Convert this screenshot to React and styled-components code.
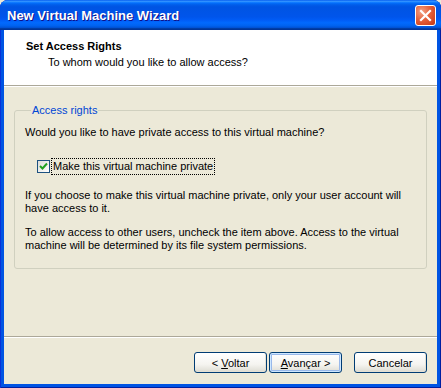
import React from 'react'
import styled, { createGlobalStyle } from 'styled-components'

const GlobalStyle = createGlobalStyle`
  html, body {
    margin: 0;
    padding: 0;
    background: #ece9d8;
  }
  body {
    font-family: 'Liberation Sans', Arial, sans-serif;
    font-size: 11px;
    color: #000;
  }
`

const App = () => {
  return (
    <Window>
      <GlobalStyle />
      <TitleBar>
        <TitleText>New Virtual Machine Wizard</TitleText>
        <CloseButton aria-label='Close'>
          <svg width='13' height='13' viewBox='0 0 13 13'>
            <path d='M2 2 L11 11 M11 2 L2 11' stroke='#fff' strokeWidth='2.2' strokeLinecap='square' />
          </svg>
        </CloseButton>
      </TitleBar>
      <Frame>
        <Header>
          <HeaderTitle>Set Access Rights</HeaderTitle>
          <HeaderSubtitle>To whom would you like to allow access?</HeaderSubtitle>
        </Header>
        <Body>
          <GroupBox>
            <Legend>Access rights</Legend>
            <Text>Would you like to have private access to this virtual machine?</Text>
            <CheckRow>
              <CheckBox>
                <svg width='9' height='9' viewBox='0 0 9 9'>
                  <path d='M1 4 L3.5 6.5 L8 1.5' fill='none' stroke='#21a121' strokeWidth='2' />
                </svg>
              </CheckBox>
              <CheckLabel>Make this virtual machine private</CheckLabel>
            </CheckRow>
            <Paragraph>
              If you choose to make this virtual machine private, only your user account will
              have access to it.
            </Paragraph>
            <Paragraph $last>
              To allow access to other users, uncheck the item above. Access to the virtual
              machine will be determined by its file system permissions.
            </Paragraph>
          </GroupBox>
        </Body>
        <Footer>
          <Button>&lt; <u>V</u>oltar</Button>
          <Button $default><u>A</u>vançar &gt;</Button>
          <Button $gap>Cancelar</Button>
        </Footer>
      </Frame>
    </Window>
  )
}

const Window = styled.div`
  width: 441px;
  height: 388px;
  display: flex;
  flex-direction: column;
  background: #0054e3;
  border-radius: 8px 8px 0 0;
  overflow: hidden;
  box-shadow: inset 1px 0 0 #0831d9, inset -1px 0 0 #001ea0, inset 0 -1px 0 #001ea0;
`

const TitleBar = styled.div`
  height: 30px;
  flex: none;
  display: flex;
  align-items: center;
  justify-content: space-between;
  padding: 0 5px 0 7px;
  background: linear-gradient(
    to bottom,
    #0058ee 0%,
    #3593ff 4%,
    #288eff 6%,
    #127dff 8%,
    #036ffc 10%,
    #0262ee 14%,
    #0057e5 20%,
    #0054e3 24%,
    #0055eb 56%,
    #005bf5 66%,
    #026afe 76%,
    #0062ef 86%,
    #0052d6 92%,
    #0040ab 94%,
    #003092 100%
  );
`

const TitleText = styled.span`
  color: #fff;
  font-family: 'Liberation Sans', Arial, sans-serif;
  font-weight: bold;
  font-size: 13px;
  text-shadow: 1px 1px #0f1089;
  padding-top: 1px;
`

const CloseButton = styled.button`
  width: 21px;
  height: 21px;
  padding: 0;
  display: flex;
  align-items: center;
  justify-content: center;
  border: 1px solid #fff;
  border-radius: 3px;
  background: radial-gradient(circle at 30% 30%, #f3a286 0%, #e4613c 45%, #d2451f 80%, #b83a17 100%);
`

const Frame = styled.div`
  flex: 1;
  display: flex;
  flex-direction: column;
  margin: 0 4px 4px 4px;
  background: #ece9d8;
`

const Header = styled.div`
  height: 56px;
  flex: none;
  background: #fff;
  border-bottom: 1px solid #aca899;
  padding: 9px 0 0 22px;
  box-sizing: border-box;
  box-shadow: 0 1px 0 #fff;
`

const HeaderTitle = styled.div`
  font-weight: bold;
  font-size: 11px;
  line-height: 14px;
`

const HeaderSubtitle = styled.div`
  padding-left: 22px;
  line-height: 14px;
  margin-top: 2px;
`

const Body = styled.div`
  flex: 1;
  padding: 18px 10px 0 10px;
`

const GroupBox = styled.fieldset`
  margin: 0;
  padding: 9px 10px 16px 10px;
  border: 1px solid #d0d0bf;
  border-radius: 3px;
  min-width: 0;
`

const Legend = styled.legend`
  color: #0046d5;
  padding: 0 1px;
  margin-left: 6px;
  line-height: 13px;
`

const Text = styled.div`
  line-height: 13px;
`

const CheckRow = styled.div`
  display: flex;
  align-items: center;
  margin: 20px 0 0 12px;
`

const CheckBox = styled.span`
  width: 11px;
  height: 11px;
  border: 1px solid #1c5180;
  background: linear-gradient(135deg, #dcdcd7 0%, #fff 100%);
  display: flex;
  align-items: center;
  justify-content: center;
`

const CheckLabel = styled.span`
  margin-left: 2px;
  padding: 1px 1px;
  line-height: 13px;
  outline: 1px dotted #000;
`

const Paragraph = styled.p`
  margin: ${p => (p.$last ? '11px 0 0' : '15px 0 0')};
  line-height: 13px;
`

const Footer = styled.div`
  height: 48px;
  flex: none;
  display: flex;
  justify-content: flex-end;
  align-items: flex-start;
  padding: 15px 10px 0 0;
  box-sizing: border-box;
  border-top: 1px solid #aca899;
  box-shadow: inset 0 1px 0 #fff;
`

const Button = styled.button`
  width: 73px;
  height: 21px;
  margin-left: ${p => (p.$gap ? '12px' : '2px')};
  padding: 0;
  font-family: 'Liberation Sans', Arial, sans-serif;
  font-size: 11px;
  color: #000;
  border: 1px solid #003c74;
  border-radius: 3px;
  background: linear-gradient(to bottom, #fff 0%, #f5f4f0 60%, #e3e2da 90%, #d6d0c5 100%);
  box-shadow: ${p =>
    p.$default
      ? 'inset 0 0 0 1px #cee7ff, inset 0 0 0 2px #98b8ea'
      : 'inset -1px -1px 0 #e3e0d4'};
`

export default App
